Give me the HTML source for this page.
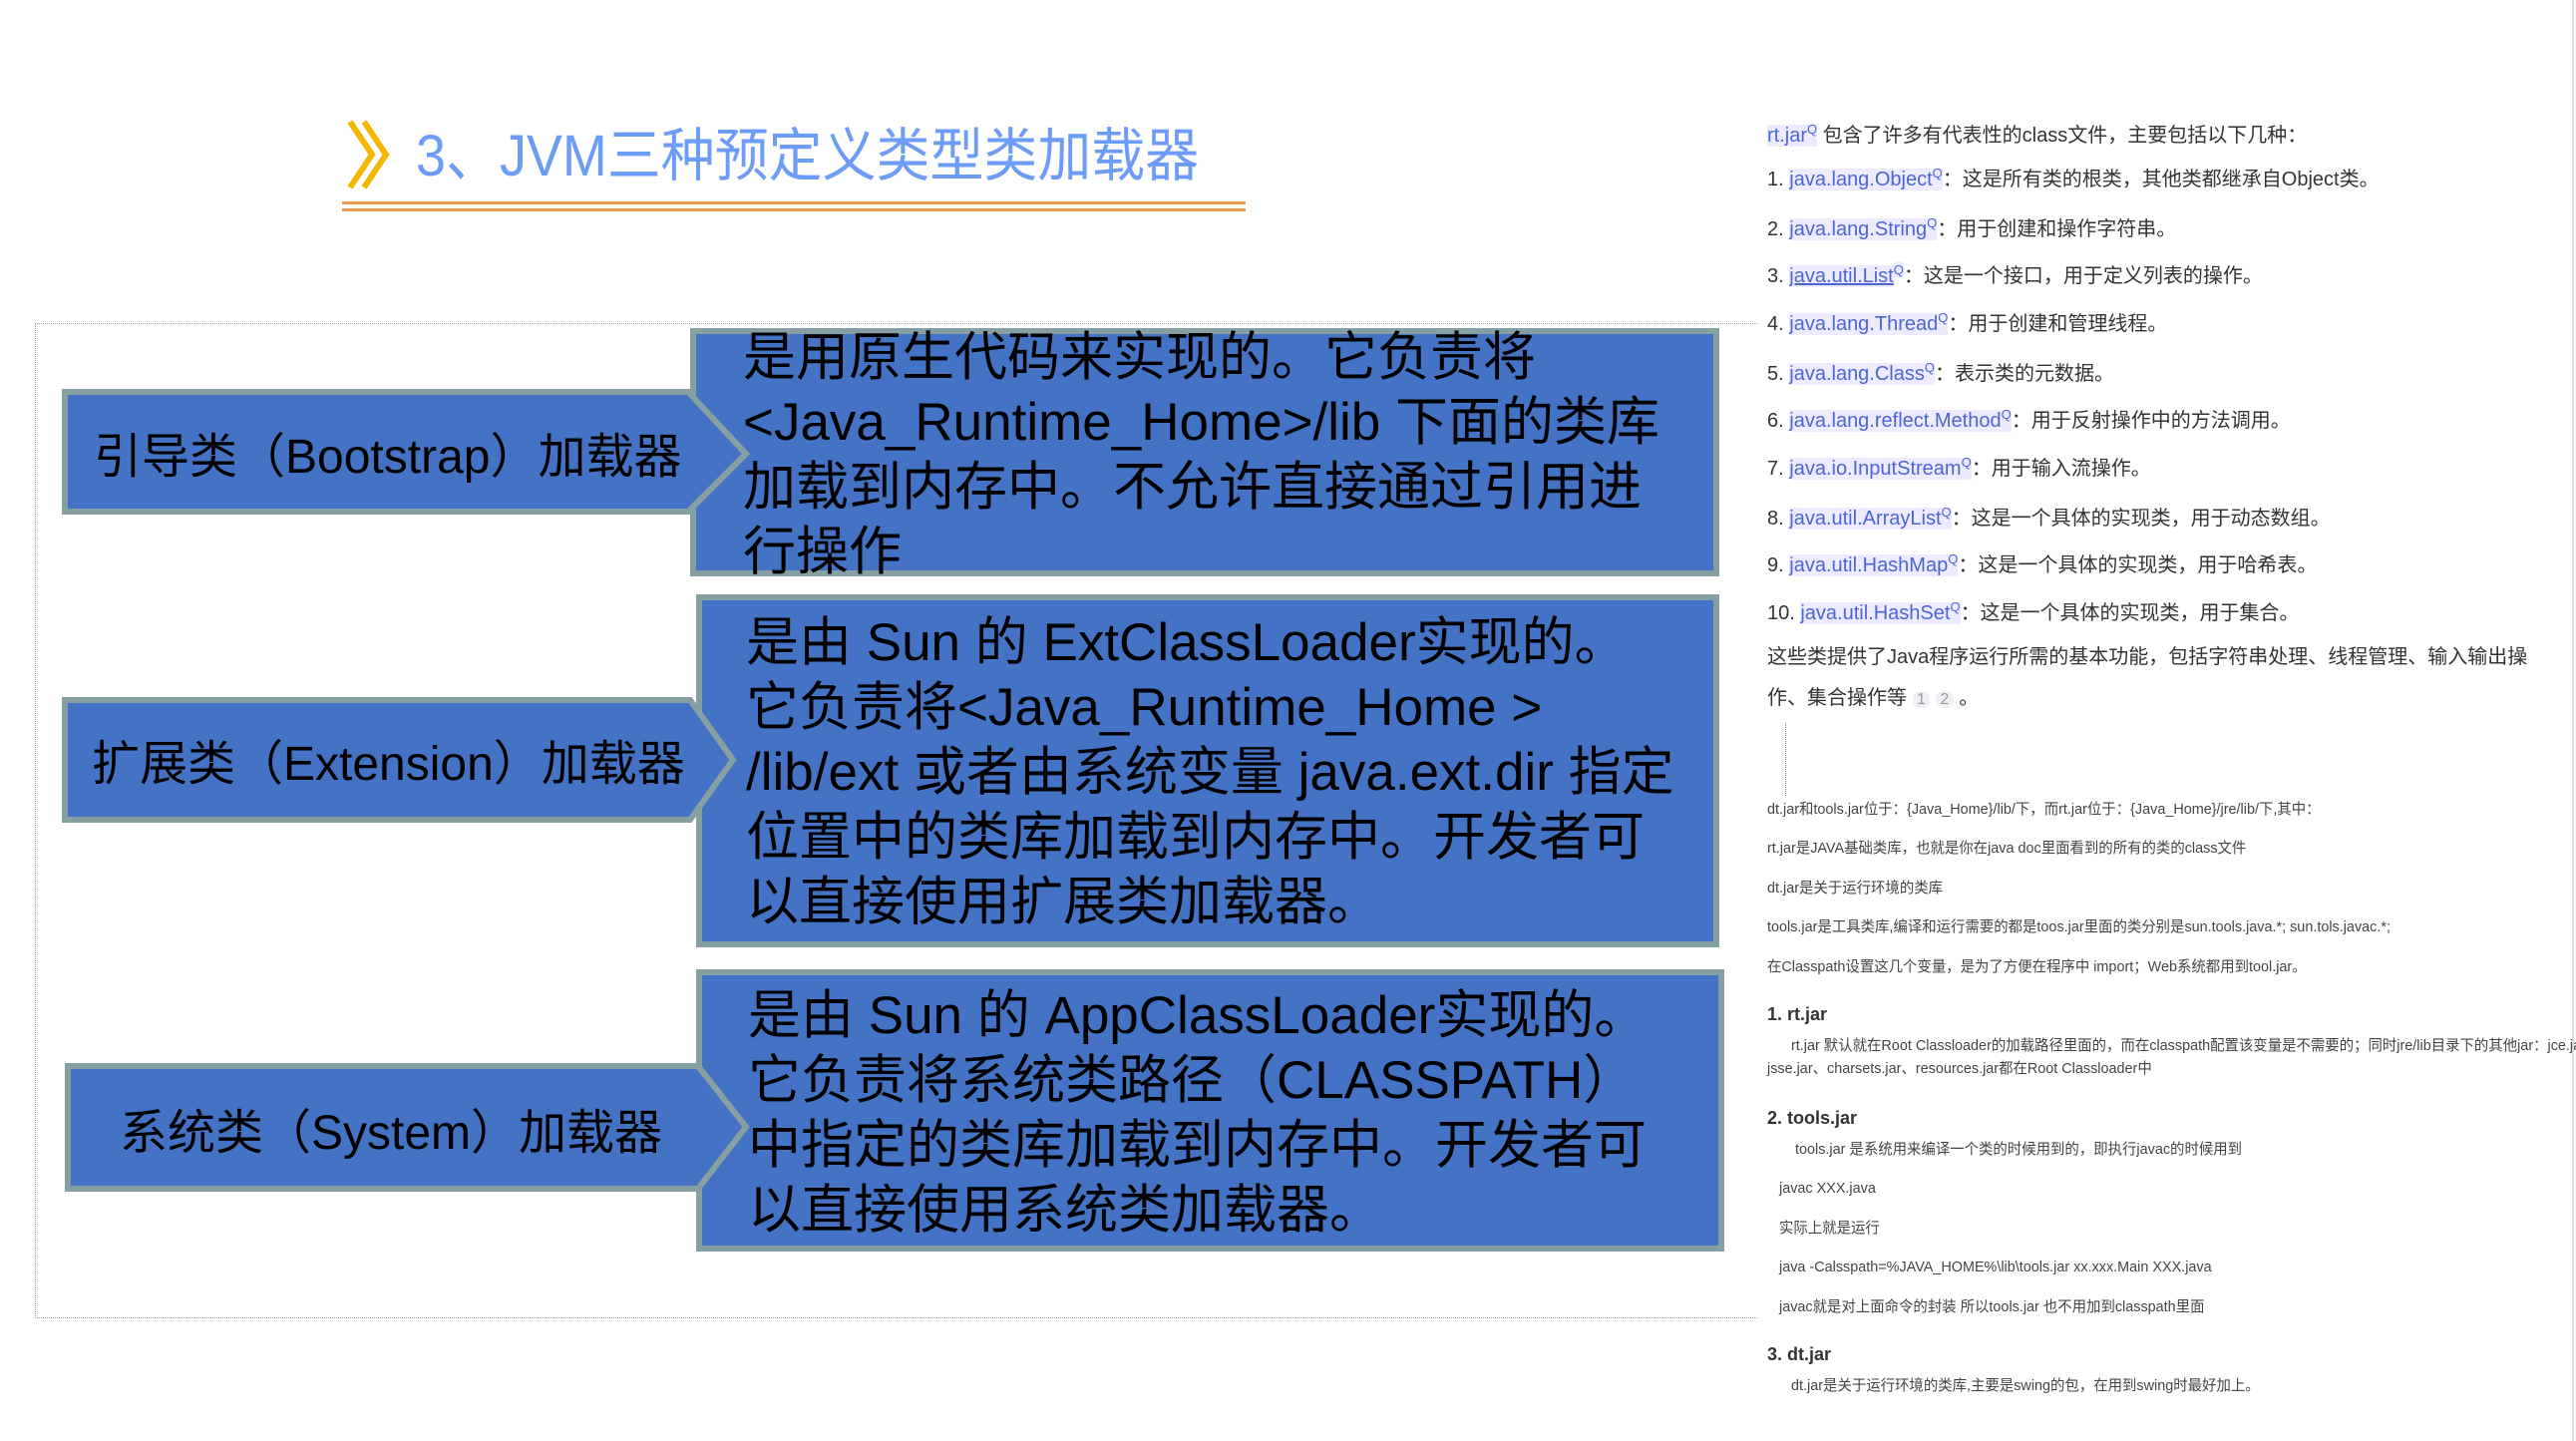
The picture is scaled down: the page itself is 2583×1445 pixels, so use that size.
<!DOCTYPE html>
<html><head><meta charset="utf-8"><style>
body{margin:0;width:2583px;height:1445px;background:#fff;position:relative;overflow:hidden;font-family:"Liberation Sans","Noto Sans CJK SC",sans-serif}
.a{position:absolute;white-space:nowrap}
.rb{position:absolute;background:#4472c4;border:6px solid #869fa3;box-sizing:border-box}
.bt{position:absolute;font-size:53px;line-height:65px;color:#000;white-space:nowrap}
.lab{position:absolute;font-size:48px;color:#000;white-space:nowrap}
.r{position:absolute;left:1772px;font-size:20px;color:#333;white-space:nowrap;line-height:24px}
.l{color:#4a66d6;background:#eeeaff}
.q{font-size:13px;vertical-align:8px;color:#4a66d6}
.s{position:absolute;left:1772px;font-size:15px;color:#444;white-space:nowrap;line-height:18px;transform:scaleX(0.96);transform-origin:0 0}
.h{position:absolute;left:1772px;font-size:18px;font-weight:bold;color:#333}
</style></head><body>
<svg class="a" style="left:345px;top:118px" width="60" height="75"><polyline points="6,4 28,37 6,70" fill="none" stroke="#f5b800" stroke-width="6"/><polyline points="20,4 42,37 20,70" fill="none" stroke="#f5b800" stroke-width="6"/></svg>
<div class="a" style="left:417px;top:122px;font-size:58px;color:#6d9cf7;line-height:70px;transform:scaleX(0.93);transform-origin:0 0">3、JVM三种预定义类型类加载器</div>
<div class="a" style="left:343px;top:202px;width:906px;height:3px;background:#f39a4a"></div>
<div class="a" style="left:343px;top:209px;width:906px;height:3px;background:#f39a4a"></div>
<div class="a" style="left:35px;top:324px;width:1727px;height:998px;border:1px dotted #999;box-sizing:border-box;border-right:none"></div>

<div class="rb" style="left:692px;top:329px;width:1032px;height:249px"></div>
<div class="rb" style="left:698px;top:596px;width:1026px;height:354px"></div>
<div class="rb" style="left:698px;top:972px;width:1031px;height:283px"></div>
<svg class="a" style="left:0;top:0" width="800" height="1300">
<polygon points="65,393 690,393 748,455 690,513 65,513" fill="#4472c4" stroke="#869fa3" stroke-width="6"/>
<polygon points="65,702 692,702 735,762 692,822 65,822" fill="#4472c4" stroke="#869fa3" stroke-width="6"/>
<polygon points="68,1069 700,1069 748,1130 700,1192 68,1192" fill="#4472c4" stroke="#869fa3" stroke-width="6"/>
</svg>
<div class="lab" style="left:94px;top:418px">引导类（Bootstrap）加载器</div>
<div class="lab" style="left:92px;top:726px">扩展类（Extension）加载器</div>
<div class="lab" style="left:120px;top:1096px">系统类（System）加载器</div>

<div class="bt" style="left:745px;top:326px">是用原生代码来实现的。它负责将<br>&lt;Java_Runtime_Home&gt;/lib 下面的类库<br>加载到内存中。不允许直接通过引用进<br>行操作</div>
<div class="bt" style="left:748px;top:612px">是由 Sun 的 ExtClassLoader实现的。<br>它负责将&lt;Java_Runtime_Home &gt;<br>/lib/ext 或者由系统变量 java.ext.dir 指定<br>位置中的类库加载到内存中。开发者可<br>以直接使用扩展类加载器。</div>
<div class="bt" style="left:750px;top:986px">是由 Sun 的 AppClassLoader实现的。<br>它负责将系统类路径（CLASSPATH）<br>中指定的类库加载到内存中。开发者可<br>以直接使用系统类加载器。</div>

<div class="r" style="top:118px"><span class="l">rt.jar<span class="q">Q</span></span> 包含了许多有代表性的class文件，主要包括以下几种：</div>
<div class="r" style="top:162px">1. <span class="l">java.lang.Object<span class="q">Q</span></span>：这是所有类的根类，其他类都继承自Object类。</div>
<div class="r" style="top:212px">2. <span class="l">java.lang.String<span class="q">Q</span></span>：用于创建和操作字符串。</div>
<div class="r" style="top:259px">3. <span class="l" style="text-decoration:underline">java.util.List</span><span class="q l">Q</span>：这是一个接口，用于定义列表的操作。</div>
<div class="r" style="top:307px">4. <span class="l">java.lang.Thread<span class="q">Q</span></span>：用于创建和管理线程。</div>
<div class="r" style="top:357px">5. <span class="l">java.lang.Class<span class="q">Q</span></span>：表示类的元数据。</div>
<div class="r" style="top:404px">6. <span class="l">java.lang.reflect.Method<span class="q">Q</span></span>：用于反射操作中的方法调用。</div>
<div class="r" style="top:452px">7. <span class="l">java.io.InputStream<span class="q">Q</span></span>：用于输入流操作。</div>
<div class="r" style="top:502px">8. <span class="l">java.util.ArrayList<span class="q">Q</span></span>：这是一个具体的实现类，用于动态数组。</div>
<div class="r" style="top:549px">9. <span class="l">java.util.HashMap<span class="q">Q</span></span>：这是一个具体的实现类，用于哈希表。</div>
<div class="r" style="top:597px">10. <span class="l">java.util.HashSet<span class="q">Q</span></span>：这是一个具体的实现类，用于集合。</div>
<div class="r" style="top:647px">这些类提供了Java程序运行所需的基本功能，包括字符串处理、线程管理、输入输出操</div>
<div class="r" style="top:688px">作、集合操作等 <span style="color:#999;background:#eef0f6;border-radius:8px;font-size:16px">&nbsp;1&nbsp;</span> <span style="color:#999;background:#eef0f6;border-radius:8px;font-size:16px">&nbsp;2&nbsp;</span> 。</div>
<div class="a" style="left:1790px;top:725px;height:73px;border-left:1px dotted #888"></div>

<div class="s" style="top:803px">dt.jar和tools.jar位于：{Java_Home}/lib/下，而rt.jar位于：{Java_Home}/jre/lib/下,其中：</div>
<div class="s" style="top:842px">rt.jar是JAVA基础类库，也就是你在java doc里面看到的所有的类的class文件</div>
<div class="s" style="top:882px">dt.jar是关于运行环境的类库</div>
<div class="s" style="top:921px">tools.jar是工具类库,编译和运行需要的都是toos.jar里面的类分别是sun.tools.java.*; sun.tols.javac.*;</div>
<div class="s" style="top:961px">在Classpath设置这几个变量，是为了方便在程序中 import；Web系统都用到tool.jar。</div>
<div class="h" style="top:1007px">1. rt.jar</div>
<div class="s" style="top:1040px">&nbsp;&nbsp;&nbsp;&nbsp;&nbsp;&nbsp;rt.jar 默认就在Root Classloader的加载路径里面的，而在classpath配置该变量是不需要的；同时jre/lib目录下的其他jar：jce.jar、</div>
<div class="s" style="top:1063px">jsse.jar、charsets.jar、resources.jar都在Root Classloader中</div>
<div class="h" style="top:1111px">2. tools.jar</div>
<div class="s" style="top:1144px">&nbsp;&nbsp;&nbsp;&nbsp;&nbsp;&nbsp;&nbsp;tools.jar 是系统用来编译一个类的时候用到的，即执行javac的时候用到</div>
<div class="s" style="top:1183px">&nbsp;&nbsp;&nbsp;javac XXX.java</div>
<div class="s" style="top:1223px">&nbsp;&nbsp;&nbsp;实际上就是运行</div>
<div class="s" style="top:1262px">&nbsp;&nbsp;&nbsp;java -Calsspath=%JAVA_HOME%\lib\tools.jar xx.xxx.Main XXX.java</div>
<div class="s" style="top:1302px">&nbsp;&nbsp;&nbsp;javac就是对上面命令的封装 所以tools.jar 也不用加到classpath里面</div>
<div class="h" style="top:1348px">3. dt.jar</div>
<div class="s" style="top:1381px">&nbsp;&nbsp;&nbsp;&nbsp;&nbsp;&nbsp;dt.jar是关于运行环境的类库,主要是swing的包，在用到swing时最好加上。</div>
<div class="a" style="left:2579px;top:0;width:2px;height:1445px;background:#ddd"></div>
</body></html>
